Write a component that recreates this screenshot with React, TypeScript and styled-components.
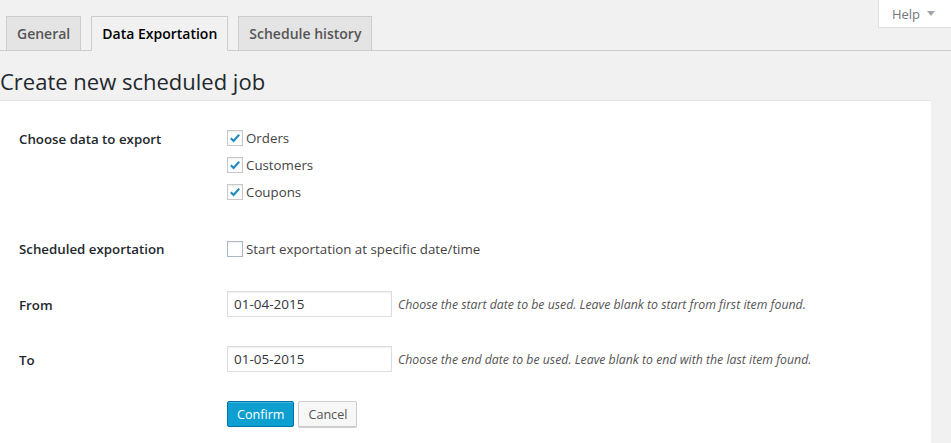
import React from "react"
import styled, { createGlobalStyle } from "styled-components"

const GlobalStyle = createGlobalStyle`
  html, body {
    margin: 0;
    padding: 0;
    background: #f1f1f1;
    font-family: "Open Sans", "Liberation Sans", sans-serif;
    color: #444;
  }
  * {
    box-sizing: border-box;
  }
`

const Page = styled.div`
  width: 951px;
  height: 443px;
  overflow: hidden;
  position: relative;
`

const HelpTab = styled.button`
  position: absolute;
  top: 0;
  right: -4px;
  width: 77px;
  height: 28px;
  background: #fff;
  border: 1px solid #e1e1e1;
  border-top: none;
  font-family: inherit;
  font-size: 13px;
  color: #72777c;
  display: flex;
  align-items: center;
  justify-content: center;
  gap: 7px;
  padding: 0 6px 0 0;
`

const Caret = styled.span`
  width: 0;
  height: 0;
  border-left: 4px solid transparent;
  border-right: 4px solid transparent;
  border-top: 5px solid #a0a5aa;
`

const TabBar = styled.nav`
  display: flex;
  gap: 10px;
  padding: 16px 0 0 6px;
  border-bottom: 1px solid #ccc;
  height: 51px;
`

const Tab = styled.a<{ $active?: boolean }>`
  display: flex;
  align-items: center;
  height: 35px;
  padding: 0 10px;
  border: 1px solid #ccc;
  border-bottom-color: ${(p) => (p.$active ? "#f1f1f1" : "#ccc")};
  background: ${(p) => (p.$active ? "#f1f1f1" : "#e4e4e4")};
  color: ${(p) => (p.$active ? "#000" : "#555")};
  font-size: 14px;
  font-weight: 600;
  text-decoration: none;
`

const Heading = styled.h1`
  margin: 0;
  padding: 16px 0 0 0;
  height: 49px;
  font-size: 22px;
  font-weight: 400;
  line-height: 29px;
  color: #23282d;
`

const Panel = styled.div`
  width: 931px;
  height: 343px;
  background: #fff;
  border-top: 1px solid #e5e5e5;
  padding: 23px 0 0 19px;
  display: flex;
  flex-direction: column;
  gap: 29px;
`

const Row = styled.div<{ $top?: number }>`
  display: grid;
  grid-template-columns: 208px 1fr;
  align-items: start;
  margin-top: ${(p) => p.$top ?? 0}px;
`

// labels sit a little lower than the first control line
const Label = styled.div<{ $h?: number; $drop?: number }>`
  font-size: 13.3px;
  font-weight: 600;
  color: #23282d;
  padding-top: ${(p) => p.$drop ?? 4}px;
  line-height: ${(p) => (p.$h ?? 27) - (p.$drop ?? 4)}px;
`

const Choices = styled.div`
  display: flex;
  flex-direction: column;
`

const Choice = styled.label`
  display: flex;
  align-items: center;
  gap: 3px;
  height: 27px;
  font-size: 13.3px;
  color: #444;
`

const Box = styled.span<{ $checked?: boolean }>`
  width: 16px;
  height: 16px;
  border: 1px solid ${(p) => (p.$checked ? "#c8c8c8" : "#a8b8c8")};
  background: #fff;
  box-shadow: inset 0 1px 2px rgba(0, 0, 0, 0.08);
  display: flex;
  align-items: center;
  justify-content: center;
`

const Field = styled.div`
  display: flex;
  align-items: center;
  gap: 6px;
`

const DateInput = styled.input`
  width: 165px;
  height: 26px;
  border: 1px solid #ddd;
  box-shadow: inset 0 1px 2px rgba(0, 0, 0, 0.07);
  padding: 0 6px;
  font-family: inherit;
  font-size: 13.5px;
  color: #32373c;
  outline: none;
`

const Description = styled.span`
  font-size: 12.3px;
  font-style: italic;
  color: #555;
`

const Buttons = styled.div`
  display: flex;
  gap: 4px;
`

const Button = styled.button<{ $primary?: boolean }>`
  height: 26px;
  padding: 0 9px;
  font-family: inherit;
  font-size: 12.6px;
  border-radius: 2px;
  border: 1px solid ${(p) => (p.$primary ? "#0073aa" : "#ccc")};
  background: ${(p) => (p.$primary ? "#0d9fd0" : "#f7f7f7")};
  color: ${(p) => (p.$primary ? "#fff" : "#555")};
  box-shadow: ${(p) =>
    p.$primary ? "inset 0 1px 0 rgba(120,200,230,0.5)" : "0 1px 0 #ccc"};
`

const Check = () => (
  <svg width="12" height="12" viewBox="0 0 12 12">
    <path
      d="M1.8 6.2 L4.6 9 L10.2 2.6"
      fill="none"
      stroke="#1e8cbe"
      strokeWidth="2.2"
    />
  </svg>
)

const CheckItem = ({ label, checked }: { label: string; checked?: boolean }) => (
  <Choice>
    <Box $checked={checked}>{checked && <Check />}</Box>
    {label}
  </Choice>
)

export default function App() {
  return (
    <Page>
      <GlobalStyle />
      <HelpTab>
        Help <Caret />
      </HelpTab>
      <TabBar>
        <Tab>General</Tab>
        <Tab $active>Data Exportation</Tab>
        <Tab>Schedule history</Tab>
      </TabBar>
      <Heading>Create new scheduled job</Heading>
      <Panel>
        <Row>
          <Label>Choose data to export</Label>
          <Choices>
            <CheckItem label="Orders" checked />
            <CheckItem label="Customers" checked />
            <CheckItem label="Coupons" checked />
          </Choices>
        </Row>
        <Row $top={1}>
          <Label $drop={2}>Scheduled exportation</Label>
          <Choices>
            <CheckItem label="Start exportation at specific date/time" />
          </Choices>
        </Row>
        <Row>
          <Label $h={26} $drop={2}>From</Label>
          <Field>
            <DateInput defaultValue="01-04-2015" />
            <Description>
              Choose the start date to be used. Leave blank to start from first item found.
            </Description>
          </Field>
        </Row>
        <Row>
          <Label $h={26} $drop={2}>To</Label>
          <Field>
            <DateInput defaultValue="01-05-2015" />
            <Description>
              Choose the end date to be used. Leave blank to end with the last item found.
            </Description>
          </Field>
        </Row>
        <Row>
          <span />
          <Buttons>
            <Button $primary>Confirm</Button>
            <Button>Cancel</Button>
          </Buttons>
        </Row>
      </Panel>
    </Page>
  )
}
